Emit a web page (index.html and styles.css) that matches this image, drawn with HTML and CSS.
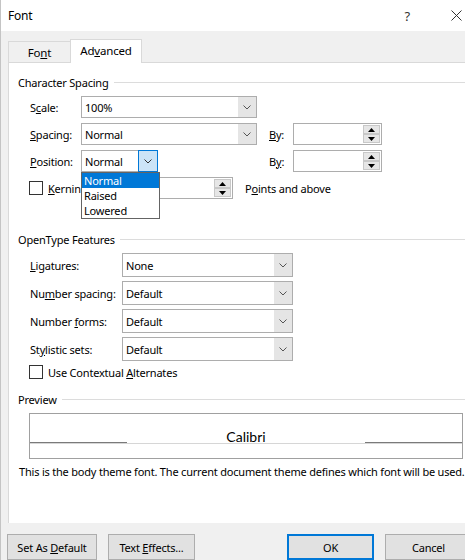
FILE: index.html
```html
<!DOCTYPE html>
<html>
<head>
<meta charset="utf-8">
<title>Font</title>
<link rel="stylesheet" href="styles.css">
</head>
<body>
<div class="window">
  <div class="titlebar">
    <span class="title">Font</span>
    <span class="help">?</span>
    <svg class="close" width="11" height="11" viewBox="0 0 11 11"><path d="M0.5 0.5 L10.5 10.5 M10.5 0.5 L0.5 10.5" stroke="#333" stroke-width="1" fill="none"/></svg>
  </div>
  <div class="tabstrip">
    <div class="tab"><span>Fo<u>n</u>t</span></div>
    <div class="tab active"><span>Ad<u>v</u>anced</span></div>
  </div>
  <div class="panel">
    <div class="group-title"><span>Character Spacing</span><span class="rule"></span></div>
    <div class="rows cs">
      <div class="row">
        <span class="lbl">S<u>c</u>ale:</span>
        <div class="combo w-wide"><span class="val">100%</span><span class="btn"><svg width="8" height="5" viewBox="0 0 8 5"><path d="M0.5 0.5 L4 4 L7.5 0.5" stroke="#555" fill="none"/></svg></span></div>
      </div>
      <div class="row">
        <span class="lbl"><u>S</u>pacing:</span>
        <div class="combo w-wide"><span class="val">Normal</span><span class="btn"><svg width="8" height="5" viewBox="0 0 8 5"><path d="M0.5 0.5 L4 4 L7.5 0.5" stroke="#555" fill="none"/></svg></span></div>
        <span class="by by1"><u>B</u>y:</span>
        <div class="spin w-by"><span class="sval"></span><span class="sbtns"><span class="sb"><svg width="7" height="4" viewBox="0 0 7 4"><path d="M3.5 0 L7 4 L0 4 Z" fill="#000"/></svg></span><span class="sb"><svg width="7" height="4" viewBox="0 0 7 4"><path d="M0 0 L7 0 L3.5 4 Z" fill="#000"/></svg></span></span></div>
      </div>
      <div class="row">
        <span class="lbl"><u>P</u>osition:</span>
        <div class="combo w-pos open"><span class="val">Normal</span><span class="btn hot"><svg width="8" height="5" viewBox="0 0 8 5"><path d="M0.5 0.5 L4 4 L7.5 0.5" stroke="#333" fill="none"/></svg></span>
          <div class="dropdown">
            <div class="opt sel">Normal</div>
            <div class="opt">Raised</div>
            <div class="opt">Lowered</div>
          </div>
        </div>
        <span class="by by2">B<u>y</u>:</span>
        <div class="spin w-by"><span class="sval"></span><span class="sbtns"><span class="sb"><svg width="7" height="4" viewBox="0 0 7 4"><path d="M3.5 0 L7 4 L0 4 Z" fill="#000"/></svg></span><span class="sb"><svg width="7" height="4" viewBox="0 0 7 4"><path d="M0 0 L7 0 L3.5 4 Z" fill="#000"/></svg></span></span></div>
      </div>
      <div class="row">
        <span class="chkwrap"><span class="chk"></span><span class="chklbl"><u>K</u>erning for fonts:</span></span>
        <div class="spin w-kern"><span class="sval"></span><span class="sbtns"><span class="sb"><svg width="7" height="4" viewBox="0 0 7 4"><path d="M3.5 0 L7 4 L0 4 Z" fill="#000"/></svg></span><span class="sb"><svg width="7" height="4" viewBox="0 0 7 4"><path d="M0 0 L7 0 L3.5 4 Z" fill="#000"/></svg></span></span></div>
        <span class="pts">P<u>o</u>ints and above</span>
      </div>
    </div>

    <div class="group-title ot-title"><span>OpenType Features</span><span class="rule"></span></div>
    <div class="rows ot">
      <div class="row">
        <span class="lbl"><u>L</u>igatures:</span>
        <div class="combo w-ot"><span class="val">None</span><span class="btn"><svg width="8" height="5" viewBox="0 0 8 5"><path d="M0.5 0.5 L4 4 L7.5 0.5" stroke="#555" fill="none"/></svg></span></div>
      </div>
      <div class="row">
        <span class="lbl">Nu<u>m</u>ber spacing:</span>
        <div class="combo w-ot"><span class="val">Default</span><span class="btn"><svg width="8" height="5" viewBox="0 0 8 5"><path d="M0.5 0.5 L4 4 L7.5 0.5" stroke="#555" fill="none"/></svg></span></div>
      </div>
      <div class="row">
        <span class="lbl">Number <u>f</u>orms:</span>
        <div class="combo w-ot"><span class="val">Default</span><span class="btn"><svg width="8" height="5" viewBox="0 0 8 5"><path d="M0.5 0.5 L4 4 L7.5 0.5" stroke="#555" fill="none"/></svg></span></div>
      </div>
      <div class="row">
        <span class="lbl">St<u>y</u>listic sets:</span>
        <div class="combo w-ot"><span class="val">Default</span><span class="btn"><svg width="8" height="5" viewBox="0 0 8 5"><path d="M0.5 0.5 L4 4 L7.5 0.5" stroke="#555" fill="none"/></svg></span></div>
      </div>
    </div>
    <div class="ctx-row"><span class="chk"></span><span class="chklbl">Use Contextual <u>A</u>lternates</span></div>

    <div class="group-title pv-title"><span>Preview</span><span class="rule"></span></div>
    <div class="pv-box">
      <div class="pv-top">
        <span class="pv-line"></span>
        <span class="pv-text">Calibri</span>
        <span class="pv-line"></span>
      </div>
      <div class="pv-bottom"></div>
    </div>
    <div class="pv-desc">This is the body theme font. The current document theme defines which font will be used.</div>
  </div>
  <div class="footer">
    <div class="button b-default"><span>Set As <u>D</u>efault</span></div>
    <div class="button b-effects"><span>Text <u>E</u>ffects...</span></div>
    <div class="button b-ok"><span>OK</span></div>
    <div class="button b-cancel"><span>Cancel</span></div>
  </div>
</div>
</body>
</html>
```

FILE: styles.css
```css
* { box-sizing: border-box; }
html, body { margin: 0; padding: 0; }
body {
  width: 465px;
  height: 560px;
  overflow: hidden;
  background: #f0f0f0;
  font-family: "Noto Sans", "DejaVu Sans", sans-serif;
  font-size: 11px;
  letter-spacing: -0.2px;
  color: #000;
}
u { text-decoration: underline; text-underline-offset: 1px; }

.window {
  height: 560px;
  border-left: 1px solid #c4c4c4;
  display: flex;
  flex-direction: column;
}

/* title bar */
.titlebar {
  height: 31px;
  flex-shrink: 0;
  background: #fff;
  display: flex;
  align-items: center;
  padding-left: 7px;
}
.title { flex: 1; font-size: 12px; }
.help { margin-right: 41px; color: #333; font-size: 13px; }
.close { margin-right: 3px; }

/* tabs */
.tabstrip {
  height: 31px;
  flex-shrink: 0;
  display: flex;
  align-items: flex-end;
  padding-left: 7px;
}
.tab {
  width: 63px;
  height: 21px;
  border: 1px solid #d9d9d9;
  border-bottom: none;
  display: flex;
  align-items: center;
  justify-content: center;
  background: #f0f0f0;
  font-size: 11.5px;
}
.tab.active {
  width: 72px;
  height: 24px;
  margin-left: -1px;
  margin-bottom: -1px;
  background: #fff;
  position: relative;
  z-index: 1;
  padding-bottom: 2px;
}

/* panel */
.panel {
  height: 461px;
  flex-shrink: 0;
  margin-left: 7px;
  background: #fff;
  border-left: 1px solid #d9d9d9;
  border-top: 1px solid #d9d9d9;
  padding: 11px 0 0 9px;
}
.group-title {
  height: 16px;
  display: flex;
  align-items: center;
  white-space: nowrap;
}
.rule {
  flex: 1;
  border-top: 1px solid #dcdcdc;
  margin-left: 5px;
}

.rows {
  display: flex;
  flex-direction: column;
  padding-left: 12px;
}
.cs { margin-top: 6px; gap: 5px; }
.cs .row { height: 22px; }
.cs .lbl { width: 51px; }
.ot { margin-top: 6px; gap: 4px; }
.ot .row { height: 24px; }
.ot .lbl { width: 92px; }

.row {
  display: flex;
  align-items: center;
  white-space: nowrap;
}

/* combo box */
.combo {
  height: 100%;
  display: flex;
  border: 1px solid #adadad;
  background: #fff;
  position: relative;
}
.w-wide { width: 176px; }
.w-pos { width: 77px; }
.w-ot { width: 171px; }
.val { flex: 1; padding-left: 3px; display: flex; align-items: center; }
.btn {
  width: 18px;
  background: #e5e5e5;
  display: flex;
  align-items: center;
  justify-content: center;
}
.btn.hot {
  background: #cce4f7;
  outline: 1px solid #0078d7;
}
.dropdown {
  position: absolute;
  left: -1px;
  top: 21px;
  width: 79px;
  border: 1px solid #646464;
  background: #fff;
  z-index: 5;
}
.opt {
  height: 15px;
  line-height: 15px;
  padding-left: 2px;
}
.opt.sel { background: #0078d7; color: #fff; }

/* by labels and spin boxes */
.by { width: 24px; }
.by1 { margin-left: 12px; }
.by2 { margin-left: 111px; }
.spin {
  height: 100%;
  display: flex;
  border: 1px solid #adadad;
  background: #fff;
}
.w-by { width: 89px; }
.w-kern { width: 78px; margin-left: 74px; }
.sval { flex: 1; }
.sbtns {
  width: 18px;
  display: flex;
  flex-direction: column;
  padding: 1px 1px 1px 0;
}
.sb {
  flex: 1;
  background: #e6e6e6;
  border: 1px solid #c8c8c8;
  display: flex;
  align-items: center;
  justify-content: center;
}

/* checkboxes */
.chkwrap {
  width: 52px;
  margin-left: -1px;
  display: flex;
  align-items: center;
  overflow: hidden;
}
.chk {
  width: 14px;
  height: 14px;
  border: 1px solid #333;
  background: #fff;
  flex-shrink: 0;
}
.chklbl { margin-left: 5px; white-space: nowrap; }
.pts { margin-left: 12px; }

.ot-title { margin-top: 32px; }
.ctx-row {
  margin-top: 3px;
  height: 16px;
  padding-left: 11px;
  display: flex;
  align-items: center;
}

/* preview */
.pv-title { margin-top: 11px; }
.pv-box {
  margin: 6px 2px 0 11px;
  height: 46px;
  border: 1px solid #a0a0a0;
  display: flex;
  flex-direction: column;
}
.pv-top {
  height: 29px;
  display: flex;
  align-items: flex-end;
  justify-content: space-between;
}
.pv-line {
  width: 97px;
  height: 1px;
  background: #7a7a7a;
}
.pv-text {
  font-family: "Lato", "Noto Sans", sans-serif;
  font-size: 14px;
  letter-spacing: 0;
  height: 18px;
  line-height: 18px;
  margin-bottom: -3px;
}
.pv-bottom {
  flex: 1;
  border-top: 1px solid #d6d6d6;
}
.pv-desc {
  margin-top: 5px;
  height: 16px;
  line-height: 16px;
  padding-left: 1px;
  white-space: nowrap;
}

/* footer */
.footer {
  flex: 1;
  display: flex;
  align-items: flex-start;
  padding: 11px 0 0 6px;
  overflow: hidden;
}
.button {
  height: 26px;
  flex-shrink: 0;
  background: #e1e1e1;
  border: 1px solid #adadad;
  display: flex;
  align-items: center;
  justify-content: center;
  white-space: nowrap;
}
.b-default { width: 90px; }
.b-effects { width: 87px; margin-left: 11px; }
.b-ok { width: 87px; margin-left: 92px; border: 2px solid #0078d7; }
.b-cancel { width: 87px; margin-left: 11px; }
```
